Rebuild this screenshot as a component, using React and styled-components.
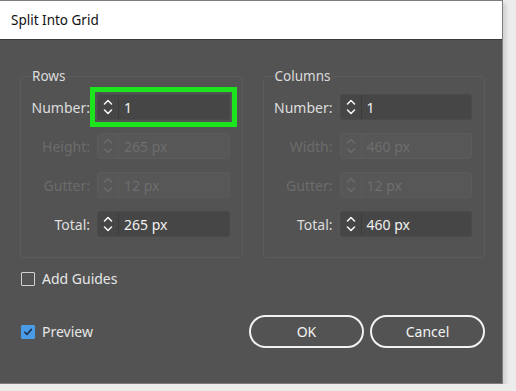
import React from 'react';
import styled, { createGlobalStyle } from 'styled-components';

const GlobalStyle = createGlobalStyle`
  html, body {
    margin: 0;
    padding: 0;
    background: #ececec;
  }
  body {
    font-family: "Noto Sans", "Open Sans", sans-serif;
  }
`;

const Window = styled.div`
  width: 502px;
  height: 382px;
  border: 1px solid #7d7d7d;
  border-left: none;
  background: #535353;
  display: flex;
  flex-direction: column;
  box-shadow: 3px 3px 4px rgba(0, 0, 0, 0.12);
`;

const TitleBar = styled.div`
  height: 38px;
  flex-shrink: 0;
  background: #fff;
  border-bottom: 1px solid #3c3c3c;
  display: flex;
  align-items: center;
  padding-left: 11px;
  font-size: 13.5px;
  color: #111;
`;

const Body = styled.div`
  flex: 1;
  padding: 27px 17px 0 20px;
  display: flex;
  flex-direction: column;
`;

const Groups = styled.div`
  display: flex;
  gap: 20px;
`;

const Group = styled.fieldset`
  flex: 1;
  margin: 0;
  padding: 9px 12px 20px 0;
  border: 1px solid #5c5c5c;
  border-radius: 4px;
  display: grid;
  grid-template-columns: 69px 1fr;
  column-gap: 7px;
  row-gap: 13px;
  align-items: center;
`;

const Legend = styled.legend`
  margin-left: 10px;
  padding: 0 1px;
  font-size: 13.5px;
  color: #dcdcdc;
`;

const Label = styled.span`
  text-align: right;
  font-size: 14px;
  color: ${({ $disabled }) => ($disabled ? '#6c6c6c' : '#dedede')};
`;

const Field = styled.div`
  height: 24px;
  display: flex;
  align-items: stretch;
  border-radius: ${({ $highlight }) => ($highlight ? '0' : '3px')};
  background: ${({ $disabled }) => ($disabled ? '#575757' : '#464646')};
  border: 1px solid ${({ $disabled }) => ($disabled ? '#5b5b5b' : '#4a4a4a')};
  outline: ${({ $highlight }) => ($highlight ? '5px solid #1de51d' : 'none')};
  outline-offset: 2px;
`;

const Spinner = styled.div`
  width: 20px;
  display: flex;
  align-items: center;
  justify-content: center;
  border-right: 1px solid ${({ $disabled }) => ($disabled ? '#5b5b5b' : '#3c3c3c')};
  color: ${({ $disabled }) => ($disabled ? '#6a6a6a' : '#f2f2f2')};
`;

const Value = styled.span`
  display: flex;
  align-items: center;
  padding-left: 5px;
  font-size: 14px;
  color: ${({ $disabled }) => ($disabled ? '#6e6e6e' : '#f2f2f2')};
`;

const Options = styled.div`
  display: flex;
  flex-direction: column;
  padding-top: 11px;
`;

const CheckRow = styled.label`
  display: flex;
  align-items: center;
  gap: 7px;
  font-size: 14px;
  color: #e6e6e6;
`;

const Box = styled.span`
  width: 12px;
  height: 12px;
  margin-left: 1px;
  border-radius: 1px;
  border: 1px solid ${({ $checked }) => ($checked ? '#4b9ce8' : '#d0d0d0')};
  background: ${({ $checked }) => ($checked ? '#4b9ce8' : 'transparent')};
  display: flex;
  align-items: center;
  justify-content: center;
`;

const Footer = styled.div`
  display: flex;
  align-items: center;
  justify-content: space-between;
  margin-top: 27px;
`;

const Buttons = styled.div`
  display: flex;
  gap: 6px;
`;

const Button = styled.button`
  width: 115px;
  height: 33px;
  border: 2px solid #f2f2f2;
  border-radius: 17px;
  background: transparent;
  color: #f4f4f4;
  font-family: inherit;
  font-size: 14px;
`;

const SpinIcon = () => (
  <svg width="10" height="18" viewBox="0 0 10 18" fill="none" stroke="currentColor" strokeWidth="1.6" strokeLinecap="round" strokeLinejoin="round">
    <path d="M1.5 6 L5 2.5 L8.5 6" />
    <path d="M1.5 12 L5 15.5 L8.5 12" />
  </svg>
);

const CheckIcon = () => (
  <svg width="10" height="10" viewBox="0 0 10 10" fill="none" stroke="#1c3550" strokeWidth="1.6" strokeLinecap="round" strokeLinejoin="round">
    <path d="M1.8 5.2 L4 7.4 L8.4 2.4" />
  </svg>
);

const NumberRow = ({ label, value, disabled, highlight }) => (
  <>
    <Label $disabled={disabled}>{label}</Label>
    <Field $disabled={disabled} $highlight={highlight}>
      <Spinner $disabled={disabled}><SpinIcon /></Spinner>
      <Value $disabled={disabled}>{value}</Value>
    </Field>
  </>
);

const Check = ({ checked, children }) => (
  <CheckRow>
    <Box $checked={checked}>{checked && <CheckIcon />}</Box>
    {children}
  </CheckRow>
);

const App = () => (
  <>
    <GlobalStyle />
    <Window>
      <TitleBar>Split Into Grid</TitleBar>
      <Body>
        <Groups>
          <Group>
            <Legend>Rows</Legend>
            <NumberRow label="Number:" value="1" highlight />
            <NumberRow label="Height:" value="265 px" disabled />
            <NumberRow label="Gutter:" value="12 px" disabled />
            <NumberRow label="Total:" value="265 px" />
          </Group>
          <Group>
            <Legend>Columns</Legend>
            <NumberRow label="Number:" value="1" />
            <NumberRow label="Width:" value="460 px" disabled />
            <NumberRow label="Gutter:" value="12 px" disabled />
            <NumberRow label="Total:" value="460 px" />
          </Group>
        </Groups>
        <Options>
          <Check>Add Guides</Check>
          <Footer>
            <Check checked>Preview</Check>
            <Buttons>
              <Button>OK</Button>
              <Button>Cancel</Button>
            </Buttons>
          </Footer>
        </Options>
      </Body>
    </Window>
  </>
);

export default App;
